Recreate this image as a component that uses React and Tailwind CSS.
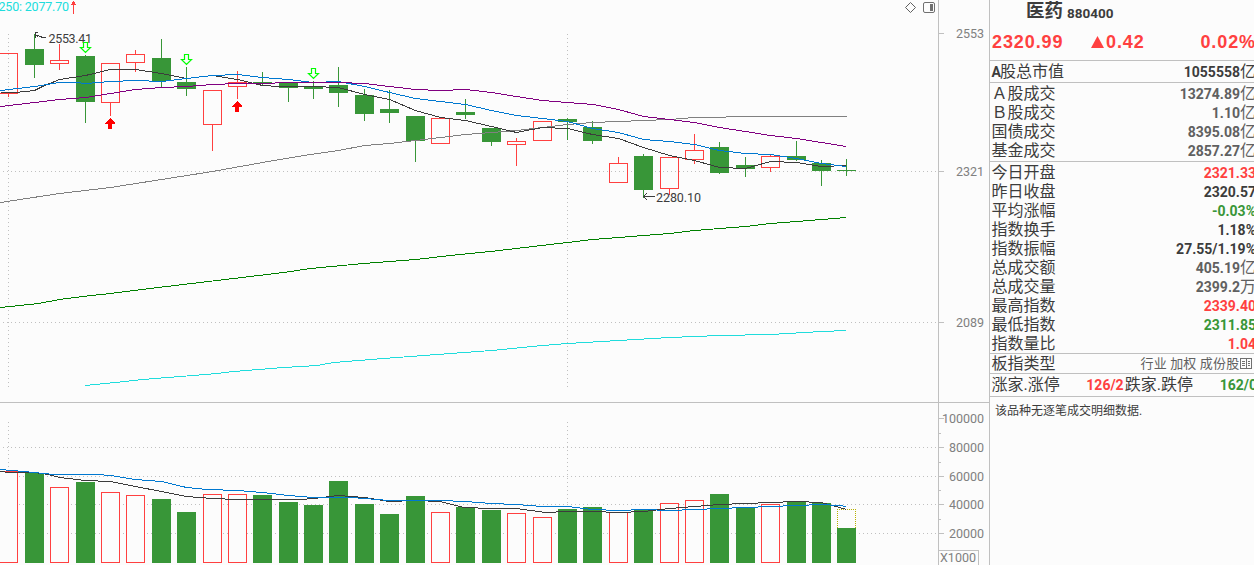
const RED = '#ff4040'
const GREEN = '#389638'
const DARK = '#3c3c3c'
const BLUE = '#0078d0'
const BG = '#fcfcfc'
const GRID = '#c0c0c0'

// x, high, body top, body bottom, low, volume top, up
const BARS = [
  [8, 53, 53, 94, 97, 471, 1],
  [34, 34, 49, 65, 78, 473, 0],
  [59, 44, 60, 64, 70, 487, 1],
  [85, 55, 56, 102, 123, 482, 0],
  [110, 63, 63, 103, 116, 492, 1],
  [135, 50, 54, 63, 72, 495, 1],
  [161, 39, 58, 81, 88, 499, 0],
  [186, 67, 82, 89, 96, 512, 0],
  [212, 90, 90, 125, 151, 494, 1],
  [237, 71, 82, 87, 99, 494, 1],
  [262, 72, 82, 84, 85, 495, 0],
  [288, 82, 83, 88, 102, 502, 0],
  [313, 81, 86, 89, 99, 505, 0],
  [338, 67, 85, 93, 107, 481, 0],
  [364, 89, 95, 114, 121, 504, 0],
  [389, 90, 109, 113, 123, 514, 0],
  [415, 116, 116, 141, 162, 496, 0],
  [440, 118, 118, 144, 144, 512, 1],
  [465, 99, 112, 115, 119, 507, 0],
  [491, 128, 128, 142, 146, 510, 0],
  [516, 138, 141, 145, 166, 513, 1],
  [542, 121, 121, 141, 141, 517, 1],
  [567, 118, 119, 122, 140, 509, 0],
  [592, 121, 127, 141, 144, 507, 0],
  [618, 157, 163, 183, 183, 512, 1],
  [643, 154, 156, 190, 198, 509, 0],
  [669, 157, 157, 189, 195, 503, 1],
  [694, 134, 150, 160, 164, 500, 1],
  [719, 142, 147, 173, 174, 494, 0],
  [745, 157, 165, 169, 177, 507, 0],
  [770, 155, 156, 168, 172, 504, 1],
  [796, 141, 156, 160, 161, 501, 0],
  [821, 160, 163, 171, 186, 503, 0],
  [846, 159, 170, 171, 176, 528, 0],
]

const PRICE_LINES = [
  { color: '#808080', points: '0,202 59,193 110,187 161,179 212,171 262,162 310,154 338,150 364,145 389,143 415,140 440,137 465,134 491,132 516,130 542,127 567,124 592,122 618,121 643,120 669,119 694,117 758,116 846,116' },
  { color: '#008000', points: '0,307 38,303 59,299 82,296 110,293 166,286 233,278 283,272 310,268 363,263 415,259 450,255 490,251 541,245 567,242 592,239 618,237 643,235 669,233 694,230 745,226 770,223 796,221 821,219 846,217' },
  { color: '#20dcdc', points: '85,385 115,382 142,379 180,376 217,373 233,371 283,367 317,365 333,362 383,358 450,353 491,350 542,345 567,343 618,340 669,337 719,335 770,334 821,331 846,330' },
  { color: DARK, points: '0,92 15,92 34,90 42,86 59,79 85,75 110,69 135,69 161,73 186,78 212,75 237,79 262,85 278,86 313,86 338,87 364,94 389,99 415,110 440,117 465,120 491,126 516,132 542,127 567,128 592,134 618,138 643,147 669,155 694,160 719,167 745,168 770,161 796,162 821,166 846,165' },
  { color: BLUE, points: '0,90 34,86 59,82 76,82 85,83 110,81 135,80 161,81 186,78 212,75 237,74 262,77 288,79 313,82 338,81 364,86 389,92 415,98 440,101 465,104 491,110 516,115 542,118 567,121 592,128 618,132 643,139 669,141 694,144 719,150 745,153 770,154 796,158 821,163 846,166' },
  { color: '#800080', points: '0,106 34,102 59,99 85,97 110,93 135,89 161,87 186,86 212,84 237,83 262,83 288,82 313,82 338,82 364,83 389,86 415,89 440,90 465,89 491,92 516,96 542,100 567,102 593,104 618,109 643,116 669,119 694,122 719,127 745,131 770,135 796,138 821,142 846,146' },
]

const VOLUME_LINES = [
  { color: DARK, points: '0,471 8,472 34,472 48,474 59,477 85,480 110,481 135,486 161,491 186,496 212,498 237,499 300,499 313,498 338,495 364,497 389,501 415,500 440,501 463,507 491,508 516,508 545,512 567,511 592,511 618,512 643,511 669,508 694,506 719,504 745,503 770,502 796,501 821,502 846,509' },
  { color: BLUE, points: '0,469 34,472 53,474 97,474 110,475 135,479 161,481 186,487 207,489 237,490 262,492 288,495 313,497 350,497 364,498 389,500 440,500 465,501 491,503 516,504 542,506 567,506 592,509 618,510 643,509 669,510 694,509 719,508 745,507 770,506 796,505 821,504 838,505 846,506' },
]

const PRICE_TICKS = [[33, '2553'], [171, '2321'], [322, '2089']]
const VOLUME_TICKS = [[418, '100000'], [447, '80000'], [476, '60000'], [504, '40000'], [533, '20000']]

const QUOTES = [
  [
    { label: 'A股总市值', value: '1055558', unit: '亿', tone: 'text-[#3c3c3c]' },
  ],
  [
    { label: 'Ａ股成交', value: '13274.89', unit: '亿', tone: 'text-[#606060]' },
    { label: 'Ｂ股成交', value: '1.10', unit: '亿', tone: 'text-[#606060]' },
    { label: '国债成交', value: '8395.08', unit: '亿', tone: 'text-[#606060]' },
    { label: '基金成交', value: '2857.27', unit: '亿', tone: 'text-[#606060]' },
  ],
  [
    { label: '今日开盘', value: '2321.33', tone: 'text-[#ff4040]' },
    { label: '昨日收盘', value: '2320.57', tone: 'text-[#3c3c3c]' },
    { label: '平均涨幅', value: '-0.03%', tone: 'text-[#389638]' },
    { label: '指数换手', value: '1.18%', tone: 'text-[#3c3c3c]' },
    { label: '指数振幅', value: '27.55/1.19%', tone: 'text-[#3c3c3c]' },
    { label: '总成交额', value: '405.19', unit: '亿', tone: 'text-[#606060]' },
    { label: '总成交量', value: '2399.2', unit: '万', tone: 'text-[#606060]' },
    { label: '最高指数', value: '2339.40', tone: 'text-[#ff4040]' },
    { label: '最低指数', value: '2311.85', tone: 'text-[#389638]' },
    { label: '指数量比', value: '1.04', tone: 'text-[#ff4040]' },
  ],
]

function Lines({ lines }) {
  return lines.map((l, i) => (
    <polyline key={i} points={l.points} transform="translate(0.5 0.5)" fill="none" stroke={l.color} />
  ))
}

function Candle({ bar: [x, high, top, bottom, low, , up] }) {
  const color = up ? RED : GREEN
  return (
    <g fill={color}>
      {high < top && <rect x={x} y={high} width="1" height={top - high} />}
      {low > bottom && <rect x={x} y={bottom} width="1" height={low - bottom} />}
      {up ? (
        <rect x={x - 8.5} y={top + 0.5} width="18" height={bottom - top - 1} fill="none" stroke={color} />
      ) : (
        <rect x={x - 9} y={top} width="19" height={bottom - top} />
      )}
    </g>
  )
}

function Volume({ bar: [x, , , , , top, up] }) {
  return up
    ? <rect x={x - 8.5} y={top + 0.5} width="18" height={562 - top} fill={BG} stroke={RED} />
    : <rect x={x - 9} y={top} width="19" height={563 - top} fill={GREEN} />
}

function SellMark({ x, y }) {
  return (
    <path
      d="M-1.5 0.5h4v5h3l-5 5l-5 -5h3z"
      transform={`translate(${x} ${y})`}
      fill={BG}
      stroke="#00ff00"
      strokeWidth="1.2"
      shapeRendering="auto"
    />
  )
}

function BuyMark({ x, y }) {
  return <path d="M0 0L5 5V6H2V11H-2V6H-5V5z" transform={`translate(${x} ${y})`} fill="#ff0000" />
}

function ChartText({ x, y, width, color, children }) {
  return (
    <text
      x={x}
      y={y}
      textLength={width}
      fill={color}
      className="font-['Roboto','Liberation_Sans',sans-serif] text-[12.5px]"
    >
      {children}
    </text>
  )
}

function Chart() {
  return (
    <svg width="989" height="565" viewBox="0 0 989 565" shapeRendering="crispEdges" className="block shrink-0">
      {/* Grid */}
      <g stroke={GRID} strokeDasharray="1 3">
        {[171.5, 322.5, 447.5, 476.5, 504.5, 533.5].map(y => (
          <line key={y} x1="3" x2="938" y1={y} y2={y} />
        ))}
        {[8.5, 567.5].map(x => (
          <g key={x}>
            <line x1={x} x2={x} y1="34" y2="388" />
            <line x1={x} x2={x} y1="422" y2="562" />
          </g>
        ))}
      </g>

      {/* Axes */}
      <g fill={GRID}>
        <rect x="938" y="0" width="1" height="565" />
        <rect x="0" y="402" width="989" height="1" />
        {[...PRICE_TICKS, ...VOLUME_TICKS].map(([y]) => (
          <rect key={y} x="939" y={y} width="5" height="1" />
        ))}
        {[433, 462, 490, 519].map(y => (
          <rect key={y} x="939" y={y} width="2" height="1" />
        ))}
        <path d="M938 550h41v15h-1v-14h-40z" />
      </g>
      {PRICE_TICKS.map(([y, t]) => (
        <ChartText key={t} x={956} y={y + 5} width={28} color="#808080">{t}</ChartText>
      ))}
      {VOLUME_TICKS.map(([y, t]) => (
        <ChartText key={t} x={984 - t.length * 7} y={y + 5} width={t.length * 7} color="#808080">{t}</ChartText>
      ))}
      <ChartText x={940} y={562} width={36} color="#808080">X1000</ChartText>

      {/* Price */}
      {BARS.map(b => <Candle key={b[0]} bar={b} />)}
      <Lines lines={PRICE_LINES} />
      <path d="M46 37.5h-3l-3 -1l-5 -2M38 32.5h-2l-1 1v4M35 34l3 3" fill="none" stroke={DARK} />
      <ChartText x={48.5} y={43} width={43.5} color={DARK}>2553.41</ChartText>
      <path d="M655 196.5h-11M647 193l-3.5 3.5l3.5 3.5" fill="none" stroke={DARK} />
      <ChartText x={656} y={202} width={45} color={DARK}>2280.10</ChartText>
      {[[85, 42], [186, 54], [313, 68]].map(([x, y]) => <SellMark key={x} x={x} y={y} />)}
      {[[110, 118], [237, 101]].map(([x, y]) => <BuyMark key={x} x={x} y={y} />)}

      {/* Volume */}
      {BARS.map(b => <Volume key={b[0]} bar={b} />)}
      <path d="M837.5 528v-18.5h18v18.5" fill={BG} stroke="#b8b000" strokeDasharray="1 1" />
      <Lines lines={VOLUME_LINES} />

      {/* Header indicators */}
      <ChartText x={-1.5} y={11} width={70.5} color="#20dcdc">250: 2077.70</ChartText>
      <path d="M73 1h1v1h1v2h1v1h-2v9h-1v-9h-2v-1h1v-2h1z" fill={RED} />
      <path d="M910.5 2.5l5 5l-5 5l-5 -5z" fill="none" stroke="#606060" shapeRendering="auto" />
      <rect x="923.5" y="2.5" width="11" height="10" rx="1.5" fill="none" stroke="#707070" shapeRendering="auto" />
      <rect x="930" y="4" width="3" height="7" fill="#707070" />
    </svg>
  )
}

function Row({ label, value, unit, tone }) {
  return (
    <div className="flex h-[19px] items-center justify-between">
      <span className="text-base text-[#3c3c3c]">
        {label.startsWith('A') ? <><b className="text-[14px] tracking-[-1px]">A</b>{label.slice(1)}</> : label}
      </span>
      <span className={`flex items-center text-[14px] font-bold ${tone}`}>
        {value}
        {unit && <span className="text-base font-normal">{unit}</span>}
      </span>
    </div>
  )
}

function Quote() {
  return (
    <aside className="h-full w-[265px] shrink-0 overflow-hidden border-l border-[#c0c0c0] font-['Roboto','Noto_Sans_CJK_SC',sans-serif] whitespace-nowrap">
      <div className="w-[267px] leading-none">
        <div className="flex h-[60px] flex-col">
          <div className="flex h-[24px] items-center gap-[4px] pl-9 text-[#3c3c3c]">
            <span className="pb-[2px] text-[18.5px] font-bold">医药</span>
            <span className="pt-[3px] text-[13.5px] font-bold">880400</span>
          </div>
          <div className="flex h-[36px] items-center pl-[2px] font-['Liberation_Sans',sans-serif] text-[18px] font-bold tracking-[0.9px] text-[#ff4040]">
            <span className="w-[99px]">2320.99</span>
            <svg width="13" height="12" className="mr-[2px]"><path d="M6.5 0L13 12H0z" fill={RED} /></svg>
            <span className="grow">0.42</span>
            <span className="mr-[1px]">0.02%</span>
          </div>
        </div>
        {QUOTES.map((rows, i) => (
          <div key={i} className="border-t border-[#c0c0c0] pt-[1px] pr-[1px] pb-[1px] pl-[1.5px]">
            {rows.map(r => <Row key={r.label} {...r} />)}
          </div>
        ))}
        <div className="-mt-px flex h-5 items-center border-t border-[#c0c0c0] pl-[1.5px]">
          <span className="w-[149px] text-base text-[#3c3c3c]">板指类型</span>
          <span className="text-[13px] tracking-[0.15px] text-[#606060]">行业 加权 成份股</span>
          <svg width="12" height="11" className="ml-[1px]" shapeRendering="crispEdges" fill="none" stroke="#707070">
            <path d="M0.5 0.5h11v10h-11zM6.5 0v11M2 3.5h3M2 5.5h3M2 7.5h3M8 3.5h2M8 5.5h2M8 7.5h2" />
          </svg>
        </div>
        <div className="flex h-[23px] items-center border-t border-[#c0c0c0] pl-[1.5px] text-base text-[#3c3c3c]">
          <span className="w-[96px]">涨家.涨停</span>
          <span className="w-[39px] text-[14px] font-bold text-[#ff4040]">126/2</span>
          <span className="w-[96px]">跌家.跌停</span>
          <span className="text-[14px] font-bold text-[#389638]">162/0</span>
        </div>
        <div className="border-t border-[#c0c0c0] pt-2 pl-[5px] text-[12px] text-[#3c3c3c]">
          该品种无逐笔成交明细数据.
        </div>
      </div>
    </aside>
  )
}

export default function App() {
  return (
    <div className="flex h-[565px] w-[1254px] overflow-hidden bg-[#fcfcfc]">
      <Chart />
      <Quote />
    </div>
  )
}
